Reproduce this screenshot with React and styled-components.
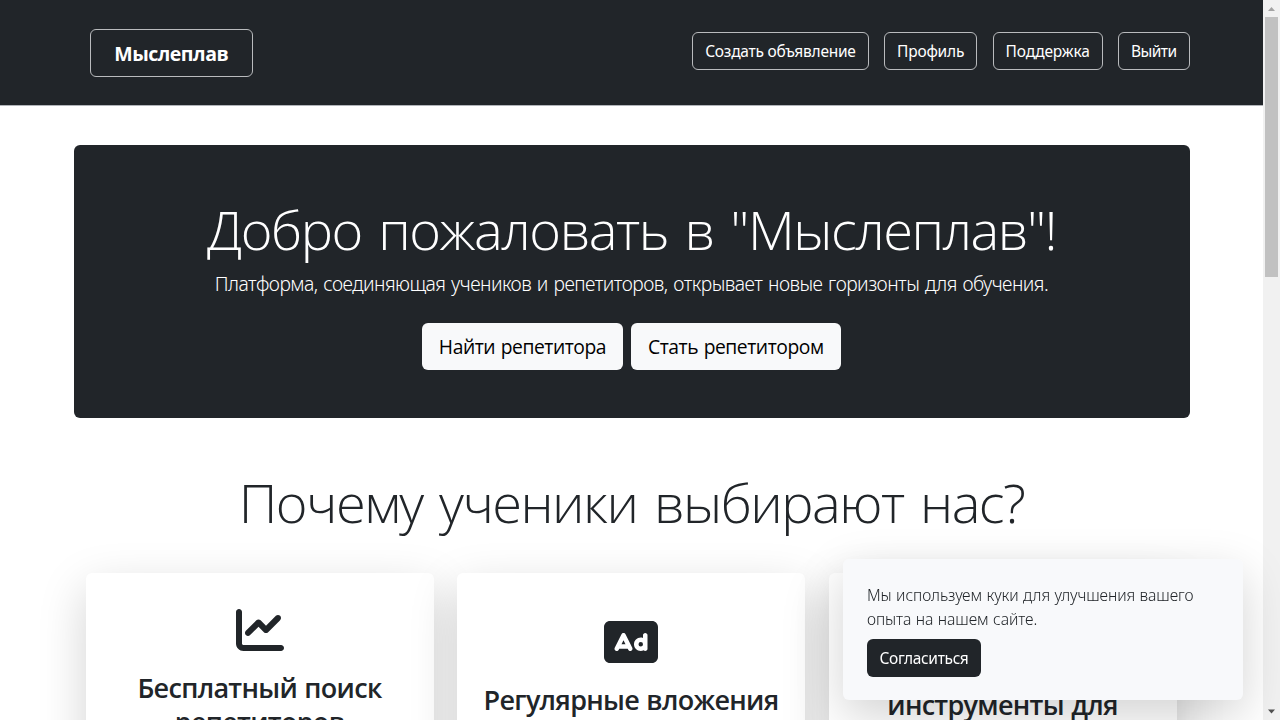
import React from 'react';
import styled, { createGlobalStyle } from 'styled-components';

const GlobalStyle = createGlobalStyle`
  *, *::before, *::after { box-sizing: border-box; }
  html, body { margin: 0; overflow: hidden; }
  body {
    background: #fff;
    color: #212529;
    font-family: 'Open Sans', 'Noto Sans', sans-serif;
    font-size: 16px;
    line-height: 1.5;
  }
`;

const Viewport = styled.div`
  display: flex;
  width: 1280px;
  height: 720px;
  overflow: hidden;
`;

const Page = styled.div`
  flex: 1;
  min-width: 0;
  overflow: hidden;
`;

const Header = styled.header`
  height: 106px;
  background: #212529;
  border-bottom: 1px solid #b1b4b9;
`;

const Container = styled.div`
  width: 1140px;
  margin: 0 auto;
  padding: 0 12px;
`;

const HeaderRow = styled(Container)`
  display: flex;
  align-items: flex-start;
  justify-content: space-between;
  padding: 29px 12px 0 28px;
`;

const OutlineLink = styled.a`
  display: flex;
  align-items: center;
  justify-content: center;
  border: 1px solid #b9bbbd;
  border-radius: 6px;
  color: #fff;
  white-space: nowrap;
  font-family: 'Noto Sans', sans-serif;
`;

const Brand = styled(OutlineLink)`
  width: 163.5px;
  height: 48px;
  padding-top: 2px;
  font-family: 'Open Sans', sans-serif;
  font-size: 19.5px;
  font-weight: 750;
  letter-spacing: -0.5px;
`;

const Nav = styled.nav`
  display: flex;
  gap: 15.5px;
  padding-top: 3px;
`;

const NavLink = styled(OutlineLink)`
  width: ${(p) => p.$width}px;
  height: 37.5px;
  padding-top: 2px;
  font-size: 15.5px;
  letter-spacing: ${(p) => p.$tracking}px;
`;

const Hero = styled.section`
  display: flex;
  flex-direction: column;
  align-items: center;
  height: 272.6px;
  margin-top: 39.4px;
  padding-top: 51px;
  border-radius: 6px;
  background: #212529;
  color: #fff;
`;

const Display = styled.h1`
  margin: 0;
  font-size: 54.2px;
  font-weight: 300;
  line-height: 67px;
  letter-spacing: ${(p) => p.$tracking}px;
  word-spacing: 4px;
  white-space: nowrap;
  text-align: center;
`;

const Lead = styled.p`
  margin: 6px 0 23.2px;
  font-family: 'Noto Sans', sans-serif;
  font-size: 19.3px;
  font-weight: 300;
  line-height: 30px;
  letter-spacing: -0.53px;
  word-spacing: 1.2px;
  white-space: nowrap;
`;

const HeroActions = styled.div`
  display: flex;
  gap: 8px;
`;

const LightButton = styled.button`
  width: ${(p) => p.$width}px;
  height: 47.5px;
  padding: 1px 0 0;
  border: 0;
  border-radius: 6px;
  background: #f8f9fa;
  color: #000;
  font: 400 19.3px 'Open Sans', sans-serif;
  letter-spacing: -0.45px;
  word-spacing: 1px;
  white-space: nowrap;
`;

const SectionTitle = styled(Display).attrs({ as: 'h2' })`
  margin-top: 51px;
`;

const Cards = styled.div`
  display: grid;
  grid-template-columns: repeat(3, 348px);
  gap: 23.5px;
  margin-top: 37px;
  padding: 0 12px;
`;

const Card = styled.article`
  display: flex;
  flex-direction: column;
  align-items: center;
  position: relative;
  height: 300px;
  padding-top: ${(p) => p.$top}px;
  border-radius: 6px;
  background: #fff;
  box-shadow: 0 16px 48px rgba(0, 0, 0, 0.175);
`;

const Icon = styled.svg`
  height: 48px;
  fill: #212529;
`;

const CardTitle = styled.h3`
  margin: 17.5px 0 0;
  font-size: 27px;
  font-weight: 550;
  line-height: 33.6px;
  letter-spacing: -0.7px;
  word-spacing: 1px;
  text-align: center;
  white-space: nowrap;
`;

const CookieNotice = styled.aside`
  position: fixed;
  left: 843px;
  top: 559px;
  width: 400px;
  height: 141px;
  padding: 24px;
  border-radius: 6px;
  background: #f8f9fb;
  box-shadow: 0 16px 48px rgba(0, 0, 0, 0.175);
`;

const CookieText = styled.p`
  margin: 0 0 8px;
  font-family: 'Noto Sans', sans-serif;
  font-size: 15.7px;
  font-weight: 300;
  line-height: 24px;
  letter-spacing: -0.08px;
  word-spacing: 0.5px;
  white-space: nowrap;
`;

const DarkButton = styled.button`
  display: block;
  width: 114px;
  height: 37.5px;
  padding: 1px 0 0;
  border: 0;
  border-radius: 6px;
  background: #212529;
  color: #fff;
  font: 400 15.5px 'Noto Sans', sans-serif;
  letter-spacing: -0.32px;
`;

const Scrollbar = styled.div`
  display: flex;
  flex-direction: column;
  align-items: center;
  flex: 0 0 17px;
  background: #f1f1f1;
`;

const ScrollArrow = styled.svg`
  display: block;
  width: 17px;
  height: 17px;
`;

const ScrollTrack = styled.div`
  flex: 1;
`;

const ScrollThumb = styled.div`
  width: 13px;
  height: 260px;
  margin-right: 1px;
  background: #c1c1c1;
`;

const navItems = [
  { label: 'Создать объявление', width: 176.4, tracking: -0.25 },
  { label: 'Профиль', width: 93, tracking: -0.22 },
  { label: 'Поддержка', width: 110, tracking: -0.15 },
  { label: 'Выйти', width: 71.4, tracking: -0.5 },
];

export default function App() {
  return (
    <Viewport>
      <GlobalStyle />
      <Page>
        <Header>
          <HeaderRow>
            <Brand>Мыслеплав</Brand>
            <Nav>
              {navItems.map((item) => (
                <NavLink key={item.label} $width={item.width} $tracking={item.tracking}>
                  {item.label}
                </NavLink>
              ))}
            </Nav>
          </HeaderRow>
        </Header>
        <Container>
          <Hero>
            <Display $tracking={-1.5}>Добро пожаловать в "Мыслеплав"!</Display>
            <Lead>
              Платформа, соединяющая учеников и репетиторов, открывает новые горизонты для обучения.
            </Lead>
            <HeroActions>
              <LightButton $width={200.6}>Найти репетитора</LightButton>
              <LightButton $width={210}>Стать репетитором</LightButton>
            </HeroActions>
          </Hero>
          <SectionTitle $tracking={-1.53}>Почему ученики выбирают нас?</SectionTitle>
          <Cards>
            <Card $top={33}>
              <Icon viewBox="0 0 512 512">
                <path d="M64 64c0-17.700-14.300-32-32-32S0 46.300 0 64v336c0 44.200 35.800 80 80 80h400c17.700 0 32-14.300 32-32s-14.300-32-32-32H80c-8.800 0-16-7.200-16-16V64zm406.600 86.600c12.500-12.500 12.500-32.800 0-45.300s-32.800-12.500-45.300 0L320 210.700l-57.400-57.400c-12.500-12.500-32.800-12.500-45.300 0l-112 112c-12.500 12.500-12.500 32.800 0 45.300s32.800 12.500 45.300 0L240 221.300l57.400 57.400c12.500 12.500 32.800 12.500 45.300 0l128-128z" />
              </Icon>
              <CardTitle>
                Бесплатный поиск
                <br />
                репетиторов
              </CardTitle>
            </Card>
            <Card $top={45}>
              <Icon viewBox="0 0 576 512">
                <path
                  fillRule="evenodd"
                  d="M64 32C28.700 32 0 60.700 0 96v320c0 35.300 28.700 64 64 64h448c35.300 0 64-28.700 64-64V96c0-35.300-28.700-64-64-64H64zM229.500 173.300l72 144c5.900 11.900 1.100 26.300-10.700 32.200s-26.300 1.100-32.200-10.700l-5.300-10.700H162.800l-5.300 10.700c-5.900 11.900-20.300 16.700-32.200 10.700s-16.700-20.300-10.700-32.200l72-144c4.100-8.100 12.400-13.300 21.500-13.300s17.400 5.100 21.500 13.300zM208 237.700L186.800 280h42.400L208 237.700zM392 256a24 24 0 1 0 0 48 24 24 0 1 0 0-48zM416 212.100V184c0-13.300 10.700-24 24-24s24 10.700 24 24v144c0 13.300-10.700 24-24 24-6.600 0-12.600-2.700-17-7-9.400 4.500-19.900 7-31 7-39.800 0-72-32.200-72-72s32.200-72 72-72c8.400 0 16.500 1.400 24 4.100z"
                />
              </Icon>
              <CardTitle>Регулярные вложения</CardTitle>
            </Card>
            <Card $top={16}>
              <Icon viewBox="0 0 512 512" />
              <CardTitle>
                Удобные
                <br />
                инструменты для
              </CardTitle>
            </Card>
          </Cards>
        </Container>
      </Page>
      <Scrollbar>
        <ScrollArrow viewBox="0 0 17 17">
          <path d="M5 11 8.500 7 12 11z" fill="#a3a3a3" />
        </ScrollArrow>
        <ScrollTrack>
          <ScrollThumb />
        </ScrollTrack>
        <ScrollArrow viewBox="0 0 17 17">
          <path d="M5 6.500H12L8.500 10.500z" fill="#505050" />
        </ScrollArrow>
      </Scrollbar>
      <CookieNotice>
        <CookieText>
          Мы используем куки для улучшения вашего
          <br />
          опыта на нашем сайте.
        </CookieText>
        <DarkButton>Согласиться</DarkButton>
      </CookieNotice>
    </Viewport>
  );
}
